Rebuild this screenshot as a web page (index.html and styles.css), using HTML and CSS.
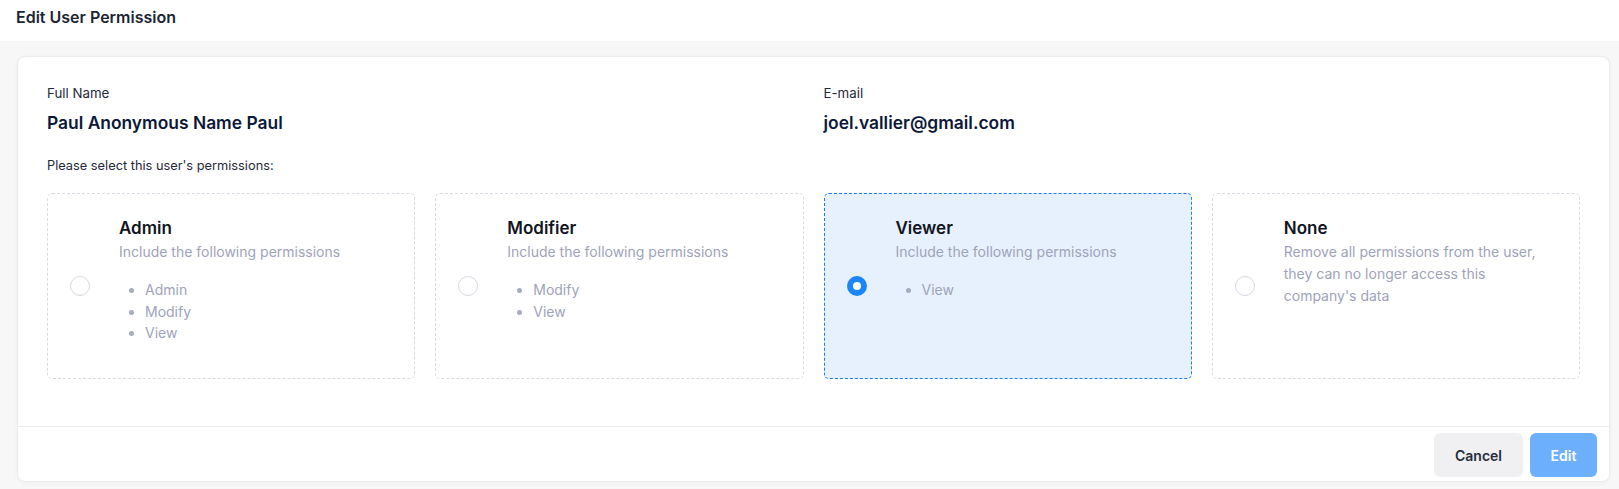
FILE: index.html
```html
<!DOCTYPE html>
<html>
<head>
<meta charset="utf-8">
<link rel="stylesheet" href="styles.css">
</head>
<body>
<header class="topbar">
  <h1 class="page-title">Edit User Permission</h1>
</header>
<main class="page">
  <section class="panel">
    <div class="panel-body">
      <div class="info-grid">
        <div class="info">
          <div class="info-label">Full Name</div>
          <div class="info-value">Paul Anonymous Name Paul</div>
        </div>
        <div class="info">
          <div class="info-label">E-mail</div>
          <div class="info-value">joel.vallier@gmail.com</div>
        </div>
      </div>
      <p class="prompt">Please select this user's permissions:</p>
      <div class="options">
        <label class="option">
          <span class="radio"></span>
          <span class="option-text">
            <span class="option-title">Admin</span>
            <span class="option-desc">Include the following permissions</span>
            <ul class="option-list">
              <li>Admin</li>
              <li>Modify</li>
              <li>View</li>
            </ul>
          </span>
        </label>
        <label class="option">
          <span class="radio"></span>
          <span class="option-text">
            <span class="option-title">Modifier</span>
            <span class="option-desc">Include the following permissions</span>
            <ul class="option-list">
              <li>Modify</li>
              <li>View</li>
            </ul>
          </span>
        </label>
        <label class="option selected">
          <span class="radio checked"></span>
          <span class="option-text">
            <span class="option-title">Viewer</span>
            <span class="option-desc">Include the following permissions</span>
            <ul class="option-list">
              <li>View</li>
            </ul>
          </span>
        </label>
        <label class="option">
          <span class="radio"></span>
          <span class="option-text">
            <span class="option-title">None</span>
            <span class="option-desc">Remove all permissions from the user, they can no longer access this company's data</span>
          </span>
        </label>
      </div>
    </div>
    <footer class="panel-footer">
      <button class="btn btn-cancel">Cancel</button>
      <button class="btn btn-edit">Edit</button>
    </footer>
  </section>
</main>
</body>
</html>
```
FILE: styles.css
```css
* { box-sizing: border-box; }
html, body { margin: 0; padding: 0; }
body {
  font-family: Inter, "Noto Sans", sans-serif;
  background: #f7f7f7;
  color: #1f2937;
  width: 1619px;
  height: 489px;
  overflow: hidden;
}
.topbar {
  background: #ffffff;
  height: 41px;
  display: flex;
  align-items: center;
  padding-left: 16px;
}
.page-title {
  margin: 0;
  font-size: 16px;
  font-weight: 600;
  color: #1d2433;
  line-height: 20px;
  padding-bottom: 8px;
}
.page {
  padding: 15px 9px 7px 17px;
}
.panel {
  background: #ffffff;
  border: 1px solid #ececec;
  border-radius: 8px;
  box-shadow: 0 1px 4px rgba(0,0,0,0.04);
  height: 426px;
  display: flex;
  flex-direction: column;
}
.panel-body {
  padding: 26px 29px 0 29px;
  flex: 1;
}
.info-grid {
  display: grid;
  grid-template-columns: 1fr 1fr;
  column-gap: 20px;
}
.info-label {
  font-size: 13.3px;
  line-height: 20px;
  color: #1f2937;
}
.info-value {
  margin-top: 9px;
  font-size: 17.4px;
  font-weight: 600;
  line-height: 22px;
  color: #0d1838;
}
.prompt {
  margin: 22px 0 0 0;
  font-size: 12.8px;
  line-height: 20px;
  color: #1f2937;
}
.options {
  margin-top: 17px;
  display: grid;
  grid-template-columns: repeat(4, 1fr);
  column-gap: 20px;
}
.option {
  display: flex;
  align-items: center;
  border: 1px dashed #d8dce4;
  border-radius: 5px;
  padding: 22px 20px 34px 22px;
  min-height: 186px;
}
.option.selected {
  background: #e7f1fd;
  border-color: #1a7ef5;
}
.radio {
  flex: none;
  width: 20px;
  height: 20px;
  border-radius: 50%;
  border: 1px solid #d6dae3;
  background: #fff;
  margin-right: 29px;
  margin-top: 12px;
}
.radio.checked {
  border: 6px solid #1c86f8;
  background: #fff;
}
.option-text {
  display: flex;
  flex-direction: column;
  align-self: flex-start;
}
.option-title {
  font-size: 17px;
  font-weight: 600;
  line-height: 24px;
  color: #111522;
}
.option-desc {
  margin-top: 1px;
  font-size: 14px;
  line-height: 22px;
  color: #9ea3b9;
}
.option-list {
  margin: 16px 0 0 0;
  padding-left: 26px;
  font-size: 14px;
  line-height: 21.5px;
  color: #9ea3b9;
}
.option-list li::marker {
  color: #a6abbd;
}
.panel-footer {
  border-top: 1px solid #ebebeb;
  display: flex;
  justify-content: flex-end;
  gap: 7px;
  padding: 6px 12px 4px 0;
}
.btn {
  font-family: Inter, "Noto Sans", sans-serif;
  font-size: 14px;
  font-weight: 600;
  height: 44px;
  border: none;
  border-radius: 6px;
}
.btn-cancel {
  width: 89px;
  background: #f0f0f2;
  color: #252c3b;
}
.btn-edit {
  width: 67px;
  background: #6cb0fd;
  color: #ffffff;
}
```
